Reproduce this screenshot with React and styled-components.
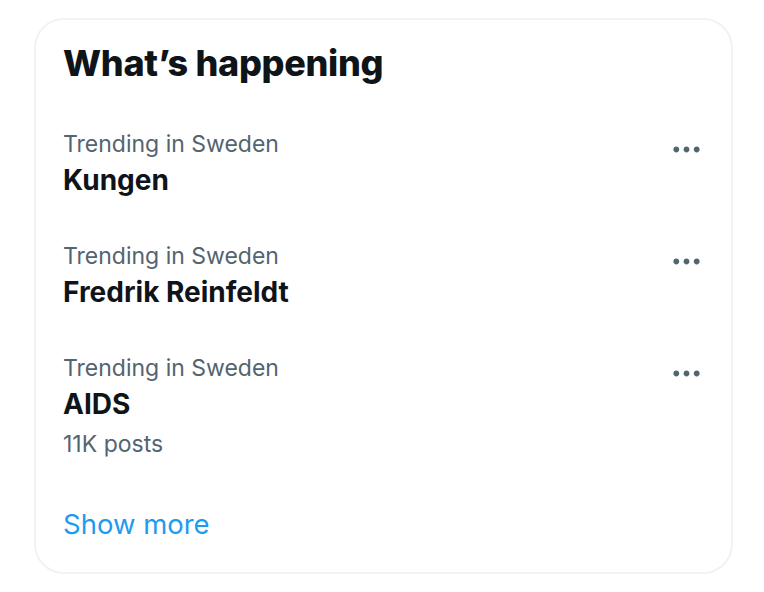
import React from 'react';
import styled, { createGlobalStyle } from 'styled-components';

const GlobalStyle = createGlobalStyle`
  html, body {
    margin: 0;
    padding: 0;
    background: #ffffff;
    font-family: Inter, "Noto Sans", "Liberation Sans", sans-serif;
    -webkit-font-smoothing: antialiased;
  }
`;

const Page = styled.div`
  padding: 18px 0 0 34px;
`;

const Card = styled.section`
  width: 699px;
  box-sizing: border-box;
  border: 2px solid #eff3f4;
  border-radius: 30px;
  overflow: hidden;
  background: #ffffff;
`;

const Header = styled.h2`
  margin: 0;
  padding: 21px 27px 23px;
  font-size: 36px;
  line-height: 45px;
  font-weight: 800;
  letter-spacing: -0.3px;
  color: #0f1419;
`;

const Item = styled.div`
  display: flex;
  align-items: flex-start;
  justify-content: space-between;
  padding: 20px 28px 22px 27px;
`;

const Texts = styled.div`
  display: flex;
  flex-direction: column;
`;

const Meta = styled.span`
  font-size: 23px;
  line-height: 30px;
  color: #536471;
  margin-top: ${({ $gap }) => ($gap ? '6px' : '0')};
`;

const Topic = styled.span`
  margin-top: 2px;
  font-size: 28px;
  line-height: 38px;
  font-weight: 700;
  color: #0f1419;
`;

const MoreButton = styled.button`
  display: flex;
  align-items: center;
  justify-content: center;
  width: 36px;
  height: 36px;
  margin: 2px -1px 0 0;
  padding: 0;
  border: none;
  background: transparent;
  color: #536471;
  cursor: pointer;
`;

const ShowMore = styled.a`
  display: block;
  padding: 24px 27px 29px;
  font-size: 27.5px;
  line-height: 38px;
  color: #1d9bf0;
  text-decoration: none;
`;

const MoreIcon = () => (
  <svg viewBox="0 0 24 24" width="35" height="35" fill="currentColor" aria-hidden="true">
    <path d="M3 12c0-1.1.9-2 2-2s2 .9 2 2-.9 2-2 2-2-.9-2-2zm9 2c1.1 0 2-.9 2-2s-.9-2-2-2-2 .9-2 2 .9 2 2 2zm7 0c1.1 0 2-.9 2-2s-.9-2-2-2-2 .9-2 2 .9 2 2 2z" />
  </svg>
);

const trends = [
  { context: 'Trending in Sweden', name: 'Kungen' },
  { context: 'Trending in Sweden', name: 'Fredrik Reinfeldt' },
  { context: 'Trending in Sweden', name: 'AIDS', posts: '11K posts' },
];

export default function App() {
  return (
    <>
      <GlobalStyle />
      <Page>
        <Card>
          <Header>What’s happening</Header>
          {trends.map((t) => (
            <Item key={t.name}>
              <Texts>
                <Meta>{t.context}</Meta>
                <Topic>{t.name}</Topic>
                {t.posts && <Meta $gap>{t.posts}</Meta>}
              </Texts>
              <MoreButton aria-label="More">
                <MoreIcon />
              </MoreButton>
            </Item>
          ))}
          <ShowMore href="#">Show more</ShowMore>
        </Card>
      </Page>
    </>
  );
}
